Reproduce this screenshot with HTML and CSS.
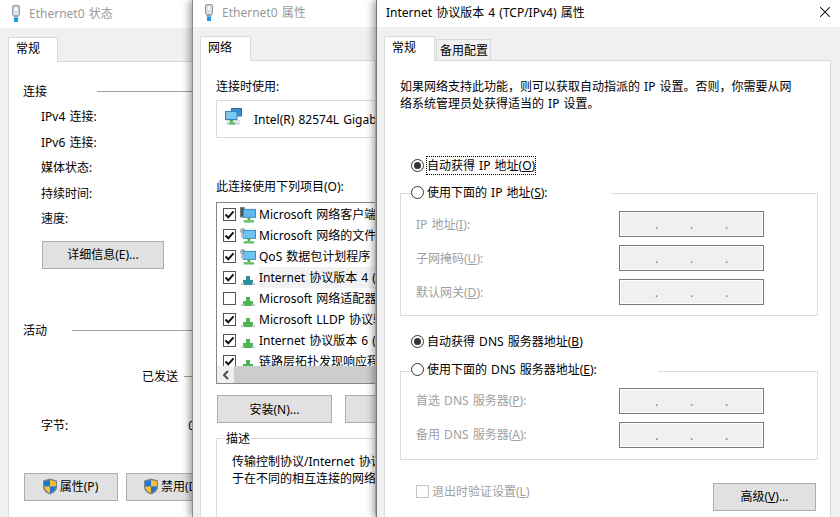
FILE: index.html
```html
<!DOCTYPE html>
<html lang="zh-CN">
<head>
  <meta charset="UTF-8">
  <title>Internet 协议版本 4 (TCP/IPv4) 属性</title>
  <link rel="stylesheet" href="styles.css">
</head>
<body>

  <svg class="sprites" width="0" height="0">
    <symbol id="plug" viewBox="0 0 10 17">
      <rect x="1.5" y="0.5" width="7" height="10" rx="1.5" fill="#dfe6ee" stroke="#8c97a5"/>
      <rect x="3" y="2" width="4" height="5" fill="#fff" stroke="#a9b3bf" stroke-width="0.6"/>
      <rect x="2.5" y="10.5" width="5" height="2" fill="#9aa7b6"/>
      <rect x="3" y="12.5" width="4" height="4.5" fill="#1e9be0"/>
    </symbol>
    <symbol id="adapter" viewBox="0 0 17 17">
      <rect x="6.5" y="0.5" width="10" height="7.5" fill="#3d8fd0" stroke="#2a6ca6"/>
      <rect x="0.5" y="3.5" width="11.5" height="8" fill="#7cc6f2" stroke="#3383c0"/>
      <rect x="1" y="12" width="14" height="1.5" fill="#cfd8df"/>
      <rect x="5" y="12" width="3" height="2.5" fill="#4caf4f"/>
      <rect x="1.5" y="14.5" width="13" height="2" fill="#c4cdd3"/>
      <rect x="4" y="14.5" width="6" height="2" fill="#55b95a"/>
    </symbol>
    <symbol id="client" viewBox="0 0 17 17">
      <rect x="0.5" y="0.5" width="4" height="10" fill="#4b4f55" stroke="#777"/>
      <rect x="3.5" y="2.5" width="13" height="8.5" fill="#5cb8ee" stroke="#3b87bf"/>
      <rect x="8" y="11" width="3" height="3" fill="#4caf4f"/>
      <rect x="4" y="14" width="11" height="2.5" fill="#62bd67"/>
    </symbol>
    <symbol id="service" viewBox="0 0 17 17">
      <circle cx="3" cy="3" r="2.4" fill="#b9bfc4" stroke="#8e959b"/>
      <rect x="3.5" y="2.5" width="13" height="8.5" fill="#6cc4f2" stroke="#3b87bf"/>
      <rect x="1" y="6" width="3" height="4" fill="#b9bfc4"/>
      <rect x="8" y="11" width="3" height="3" fill="#4caf4f"/>
      <rect x="4" y="14" width="11" height="2.5" fill="#62bd67"/>
    </symbol>
    <symbol id="protocol" viewBox="0 0 16 16">
      <rect x="6" y="6" width="4" height="5" fill="currentColor"/>
      <rect x="3" y="10" width="10" height="3" fill="currentColor"/>
      <rect x="1" y="13" width="14" height="2" fill="#c3ccd2"/>
      <rect x="4" y="13" width="8" height="2" fill="currentColor"/>
    </symbol>
    <symbol id="shield" viewBox="0 0 16 17">
      <path d="M8 .5 15 2.5V9c0 3.5-3 6-7 7.5C4 15 1 12.500 1 9V2.500Z" fill="#7b8490"/>
      <path d="M8 2 2.200 3.500V8.500H8Z" fill="#1a78d0"/>
      <path d="M8 2 13.800 3.500V8.500H8Z" fill="#f8c032"/>
      <path d="M2.200 8.500C2.500 11.500 5 13.800 8 15V8.500Z" fill="#f8c032"/>
      <path d="M13.800 8.500C13.500 11.500 11 13.800 8 15V8.500Z" fill="#1a78d0"/>
    </symbol>
    <symbol id="tick" viewBox="0 0 11 11">
      <path d="M1.500 5.500 4.300 8.300 9.500 2.300" fill="none" stroke="#111" stroke-width="2"/>
    </symbol>
  </svg>

  <div class="desktop">

    <section class="win win-status">
      <div class="titlebar titlebar-tall">
        <svg class="title-icon"><use href="#plug"/></svg>
        <span class="title-text">Ethernet0 状态</span>
      </div>
      <div class="tabs">
        <div class="tab active">常规</div>
      </div>
      <div class="panel">
        <div class="heading"><span>连接</span><i class="rule rule-wide"></i></div>
        <div class="info-list">
          <div>IPv4 连接:</div>
          <div>IPv6 连接:</div>
          <div>媒体状态:</div>
          <div>持续时间:</div>
          <div>速度:</div>
        </div>
        <button class="btn btn-details">详细信息(E)...</button>
        <div class="heading heading-activity"><span>活动</span><i class="rule"></i></div>
        <div class="sent-row"><span>已发送</span><i class="rule"></i></div>
        <div class="bytes-row"><span>字节:</span><span>0</span></div>
        <div class="status-buttons">
          <button class="btn btn-shield"><svg class="shield"><use href="#shield"/></svg>属性(P)</button>
          <button class="btn btn-shield"><svg class="shield"><use href="#shield"/></svg>禁用(D)</button>
        </div>
      </div>
    </section>

    <section class="win win-props">
      <div class="titlebar">
        <svg class="title-icon"><use href="#plug"/></svg>
        <span class="title-text">Ethernet0 属性</span>
      </div>
      <div class="tabs">
        <div class="tab active">网络</div>
      </div>
      <div class="panel">
        <div>连接时使用:</div>
        <div class="adapter-box">
          <svg class="adapter-icon"><use href="#adapter"/></svg>
          <span>Intel(R) 82574L Gigabit Network Connection</span>
        </div>
        <div class="items-label">此连接使用下列项目(O):</div>
        <div class="item-list">
          <div class="item"><span class="check on"><svg><use href="#tick"/></svg></span><svg class="item-icon"><use href="#client"/></svg><span class="item-text">Microsoft 网络客户端</span></div>
          <div class="item"><span class="check on"><svg><use href="#tick"/></svg></span><svg class="item-icon"><use href="#service"/></svg><span class="item-text">Microsoft 网络的文件和打印机共享</span></div>
          <div class="item"><span class="check on"><svg><use href="#tick"/></svg></span><svg class="item-icon"><use href="#service"/></svg><span class="item-text">QoS 数据包计划程序</span></div>
          <div class="item selected"><span class="check on"><svg><use href="#tick"/></svg></span><svg class="item-icon"><use href="#protocol"/></svg><span class="item-text">Internet 协议版本 4 (TCP/IPv4)</span></div>
          <div class="item"><span class="check"></span><svg class="item-icon"><use href="#protocol"/></svg><span class="item-text">Microsoft 网络适配器多路传送器协议</span></div>
          <div class="item"><span class="check on"><svg><use href="#tick"/></svg></span><svg class="item-icon"><use href="#protocol"/></svg><span class="item-text">Microsoft LLDP 协议驱动程序</span></div>
          <div class="item"><span class="check on"><svg><use href="#tick"/></svg></span><svg class="item-icon"><use href="#protocol"/></svg><span class="item-text">Internet 协议版本 6 (TCP/IPv6)</span></div>
          <div class="item"><span class="check on"><svg><use href="#tick"/></svg></span><svg class="item-icon"><use href="#protocol"/></svg><span class="item-text">链路层拓扑发现响应程序</span></div>
          <div class="scrollbar">
            <span class="scroll-left"><svg width="8" height="10" viewBox="0 0 8 10"><path d="M6 1 2 5 6 9" fill="none" stroke="#505050" stroke-width="2"/></svg></span>
            <span class="scroll-thumb"></span>
          </div>
        </div>
        <div class="list-buttons">
          <button class="btn btn-install">安装(N)...</button>
          <button class="btn btn-uninstall">卸载(U)</button>
        </div>
        <div class="desc-group">
          <div class="desc-legend">描述</div>
          <p class="desc-text">传输控制协议/Internet 协议。该协议是默认的广域网络协议，用<br>于在不同的相互连接的网络上通信。</p>
        </div>
      </div>
    </section>

    <section class="win win-ipv4">
      <div class="titlebar titlebar-main">
        <span class="title-text">Internet 协议版本 4 (TCP/IPv4) 属性</span>
        <svg class="close" width="10" height="10" viewBox="0 0 10 10"><path d="M0 0 10 10M10 0 0 10" stroke="#222" stroke-width="1.100"/></svg>
      </div>
      <div class="tabs">
        <div class="tab active">常规</div>
        <div class="tab">备用配置</div>
      </div>
      <div class="panel panel-ipv4">
        <p class="intro">如果网络支持此功能，则可以获取自动指派的 IP 设置。否则，你需要从网<br>络系统管理员处获得适当的 IP 设置。</p>

        <div class="choice choice-ip-auto"><span class="radio on"></span><span class="focused">自动获得 IP 地址(<u>O</u>)</span></div>
        <div class="choice choice-second choice-ip"><span class="radio"></span><span>使用下面的 IP 地址(<u>S</u>):</span></div>
        <div class="group">
          <div class="field"><span>IP 地址(<u>I</u>):</span><span class="ip-input"><b>.</b><b>.</b><b>.</b></span></div>
          <div class="field"><span>子网掩码(<u>U</u>):</span><span class="ip-input"><b>.</b><b>.</b><b>.</b></span></div>
          <div class="field"><span>默认网关(<u>D</u>):</span><span class="ip-input"><b>.</b><b>.</b><b>.</b></span></div>
        </div>

        <div class="choice choice-dns-auto"><span class="radio on"></span><span>自动获得 DNS 服务器地址(<u>B</u>)</span></div>
        <div class="choice choice-dns"><span class="radio"></span><span>使用下面的 DNS 服务器地址(<u>E</u>):</span></div>
        <div class="group group-dns">
          <div class="field"><span>首选 DNS 服务器(<u>P</u>):</span><span class="ip-input"><b>.</b><b>.</b><b>.</b></span></div>
          <div class="field"><span>备用 DNS 服务器(<u>A</u>):</span><span class="ip-input"><b>.</b><b>.</b><b>.</b></span></div>
        </div>

        <div class="footer-row">
          <div class="validate"><span class="check disabled"></span><span>退出时验证设置(<u>L</u>)</span></div>
          <button class="btn btn-advanced">高级(<u>V</u>)...</button>
        </div>
      </div>
    </section>

  </div>

</body>
</html>
```

FILE: styles.css
```css
html, body {
  margin: 0;
  padding: 0;
  background: #f0f0f0;
  font-family: "Noto Sans", "Noto Sans CJK SC", sans-serif;
  font-size: 12px;
  line-height: 17px;
  word-spacing: 1px;
  color: #000;
}

p {
  margin: 0;
}

.sprites {
  position: absolute;
}

.desktop {
  position: relative;
  width: 840px;
  height: 517px;
  overflow: hidden;
}

/* windows */
.win {
  position: absolute;
  top: 0;
  height: 517px;
  background: #f0f0f0;
  overflow: hidden;
}

.win-status {
  left: 0;
  width: 193px;
}

.win-props {
  left: 192px;
  width: 185px;
  border-left: 1px solid #8a8a8a;
  box-shadow: -3px 0 7px rgba(0, 0, 0, 0.35);
  overflow: visible;
  clip-path: inset(0 0 0 -12px);
}

.win-ipv4 {
  left: 376px;
  width: 464px;
  border-left: 1px solid #777;
  box-shadow: -3px 0 7px rgba(0, 0, 0, 0.35);
  overflow: visible;
  clip-path: inset(0 0 0 -12px);
}

.win-props .panel {
  width: 176px;
  overflow: hidden;
}

.titlebar {
  display: flex;
  align-items: center;
  height: 27px;
  padding-left: 11px;
  padding-bottom: 2px;
  box-sizing: border-box;
  background: #fff;
}

.titlebar-tall {
  height: 28px;
  padding-left: 11px;
  padding-bottom: 1px;
}

.titlebar-main {
  justify-content: space-between;
  padding-left: 9px;
  padding-right: 11px;
  padding-bottom: 3px;
}

.title-icon {
  width: 10px;
  height: 17px;
  margin-right: 8px;
  flex: none;
}

.title-text {
  color: #999;
}

.titlebar-main .title-text {
  color: #000;
}

/* tabs */
.tabs {
  display: flex;
  align-items: flex-end;
  padding: 9px 0 0 7px;
  height: 24px;
}

.win-status .tabs {
  padding-left: 8px;
}

.tab {
  position: relative;
  height: 21px;
  width: 55px;
  box-sizing: border-box;
  padding-left: 3px;
  border: 1px solid #d9d9d9;
  border-bottom: 0;
  margin-left: 1px;
  line-height: 21px;
}

.tab.active {
  z-index: 1;
  width: 51px;
  height: 25px;
  margin: 0 0 -1px;
  padding-left: 7px;
  background: #fff;
  line-height: 22px;
}

.win-status .tab.active {
  width: 50px;
}

.panel {
  height: 470px;
  margin-left: 7px;
  padding: 16.5px 0 0 15px;
  background: #fff;
  border: 1px solid #d9d9d9;
  box-sizing: border-box;
  white-space: nowrap;
}

.win-status .panel {
  margin-left: 8px;
  width: 185px;
  padding: 20.5px 0 0 14px;
  overflow: hidden;
}

.panel-ipv4 {
  width: 447px;
  padding-right: 12px;
}

/* status window */
.heading {
  display: flex;
  align-items: center;
}

.rule {
  flex: 1;
  height: 1px;
  background: #a0a0a0;
  margin-left: 25px;
}

.rule-wide {
  margin-left: 50px;
}

.heading-activity {
  margin-top: 53.5px;
}

.info-list {
  display: flex;
  flex-direction: column;
  gap: 8.5px;
  margin-top: 8.5px;
  padding-left: 18px;
}

.btn {
  display: flex;
  align-items: center;
  justify-content: center;
  height: 28px;
  padding: 0;
  font: inherit;
  color: #000;
  background: #e1e1e1;
  border: 1px solid #adadad;
  box-sizing: border-box;
  white-space: nowrap;
}

.btn-details {
  width: 122px;
  margin: 13.5px 0 0 19px;
}

.sent-row {
  display: flex;
  align-items: center;
  margin-top: 28.5px;
  padding-left: 119px;
}

.sent-row .rule {
  margin-left: 6px;
}

.bytes-row {
  display: flex;
  justify-content: space-between;
  margin-top: 32.5px;
  padding-left: 18px;
  width: 154px;
}

.status-buttons {
  display: flex;
  gap: 8px;
  margin-top: 38.5px;
  padding-left: 1px;
}

.btn-shield {
  flex: none;
  width: 94px;
}

.shield {
  width: 16px;
  height: 17px;
  margin: 0 2px 0 -2px;
}

/* properties window */
.adapter-box {
  display: flex;
  align-items: center;
  width: 300px;
  height: 38px;
  margin-top: 5.5px;
  padding-left: 8px;
  border: 1px solid #d9d9d9;
  box-sizing: border-box;
}

.adapter-icon {
  width: 17px;
  height: 17px;
  margin: -6px 12px 0 0;
  flex: none;
}

.items-label {
  margin-top: 39.5px;
}

.item-list {
  position: relative;
  width: 300px;
  height: 182px;
  margin-top: 7.5px;
  padding-top: 1px;
  border: 1px solid #828790;
  box-sizing: border-box;
  overflow: hidden;
}

.item {
  display: flex;
  align-items: center;
  height: 21px;
  padding-left: 6px;
}

.check {
  display: flex;
  align-items: center;
  justify-content: center;
  flex: none;
  width: 11px;
  height: 11px;
  border: 1px solid #555;
  background: #fff;
}

.check svg {
  width: 11px;
  height: 11px;
}

.check.disabled {
  width: 11px;
  height: 11px;
  border-color: #c4c4c4;
}

.item-icon {
  flex: none;
  width: 16px;
  height: 16px;
  margin: 0 3px 0 4px;
  color: #4eb553;
}

.item.selected .item-icon {
  color: #2a8f9c;
}

.item-text {
  flex: 1;
  line-height: 21px;
}

.item.selected .item-text {
  background: #f2f2f2;
}

.scrollbar {
  position: absolute;
  left: 0;
  right: 0;
  bottom: 0;
  display: flex;
  height: 17px;
  background: #f0f0f0;
}

.scroll-left {
  display: flex;
  align-items: center;
  justify-content: center;
  width: 17px;
}

.scroll-thumb {
  flex: 1;
  background: #cdcdcd;
}

.list-buttons {
  display: flex;
  gap: 13px;
  margin: 11px 0 0 1px;
}

.btn-install,
.btn-uninstall {
  flex: none;
  width: 115px;
}

.desc-group {
  width: 300px;
  height: 120px;
  margin-top: 15px;
  border: 1px solid #d9d9d9;
  padding-left: 15px;
}

.desc-legend {
  width: fit-content;
  margin: -9px 0 0 -7px;
  padding: 0 1px;
  background: #fff;
}

.desc-text {
  margin-top: 6px;
}

/* ipv4 window */
.intro {
  width: 430px;
}

.choice {
  position: relative;
  display: flex;
  align-items: center;
  width: fit-content;
  height: 17px;
  margin-left: 11px;
  background: #fff;
}

.choice-ip-auto {
  margin-top: 45px;
}

.choice-second {
  margin-top: 10px;
}

.choice-ip {
  width: 200px;
}

.choice-dns-auto {
  margin-top: 16.5px;
}

.choice-dns {
  width: 247px;
  margin-top: 11px;
}

.radio {
  flex: none;
  position: relative;
  width: 11px;
  height: 11px;
  margin-right: 3px;
  border: 1px solid #333;
  border-radius: 50%;
  background: #fff;
}

.radio.on::after {
  content: "";
  position: absolute;
  top: 2px;
  left: 2px;
  width: 7px;
  height: 7px;
  border-radius: 50%;
  background: #333;
}

.focused {
  outline: 1px dotted #000;
  outline-offset: 0;
}

.group {
  display: flex;
  flex-direction: column;
  gap: 8px;
  margin-top: -7.5px;
  padding: 17px 53px 10px 15px;
  border: 1px solid #dcdcdc;
  color: #a0a0a0;
}

.group-dns {
  margin-top: -7px;
  padding: 16px 53px 11px 15px;
}

.field {
  display: flex;
  align-items: center;
  justify-content: space-between;
  height: 26px;
}

.ip-input {
  display: flex;
  justify-content: center;
  width: 145px;
  height: 26px;
  border: 1px solid #7a7a7a;
  box-sizing: border-box;
  box-shadow: inset 0 0 0 1px #fff;
  background: #f0f0f0;
  color: #777;
}

.ip-input b {
  width: 35px;
  font-weight: normal;
  text-align: center;
  line-height: 26px;
}

.footer-row {
  display: flex;
  justify-content: space-between;
  margin-top: 23px;
  padding: 0 2px 0 16px;
}

.validate {
  display: flex;
  align-items: center;
  gap: 3px;
  height: 17px;
  color: #a0a0a0;
}

.btn-advanced {
  width: 103px;
}
```
